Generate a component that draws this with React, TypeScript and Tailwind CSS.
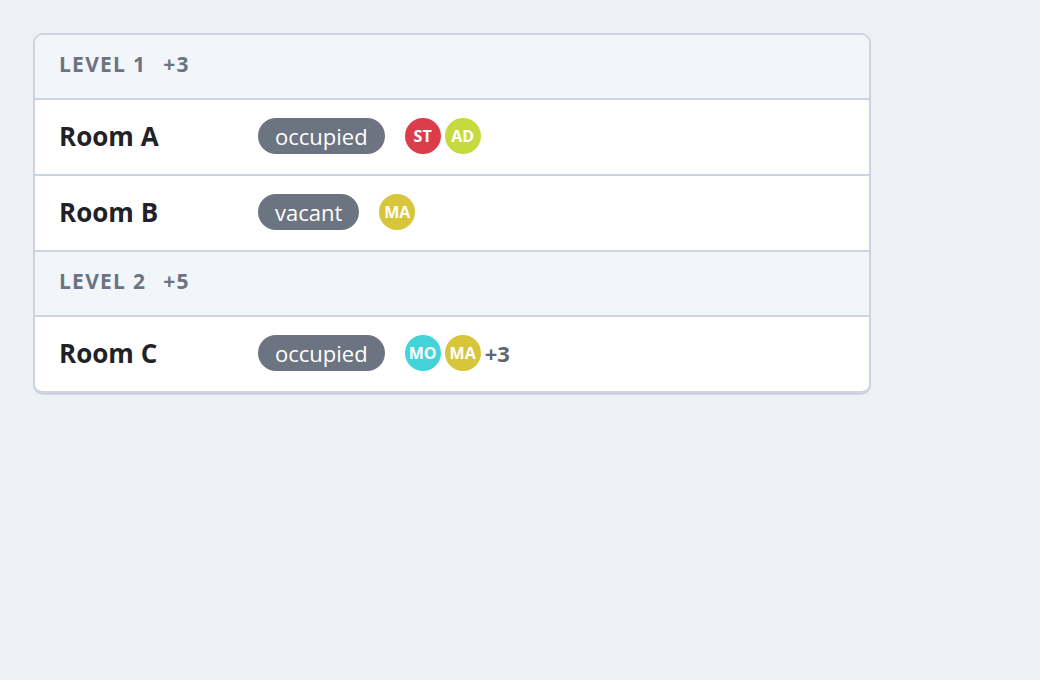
type Person = { initials: string; color: string };

interface Room {
  name: string;
  status: string;
  people: Person[];
  extra?: number;
}

interface Level {
  label: string;
  more: number;
  rooms: Room[];
}

const levels: Level[] = [
  {
    label: "Level 1",
    more: 3,
    rooms: [
      {
        name: "Room A",
        status: "occupied",
        people: [
          { initials: "ST", color: "bg-[#dc3d4d]" },
          { initials: "AD", color: "bg-[#c6d93f]" },
        ],
      },
      {
        name: "Room B",
        status: "vacant",
        people: [{ initials: "MA", color: "bg-[#d7c53b]" }],
      },
    ],
  },
  {
    label: "Level 2",
    more: 5,
    rooms: [
      {
        name: "Room C",
        status: "occupied",
        people: [
          { initials: "MO", color: "bg-[#45d3da]" },
          { initials: "MA", color: "bg-[#d7c53b]" },
        ],
        extra: 3,
      },
    ],
  },
];

export default function App() {
  return (
    <div className="min-h-[680px] bg-[#edf1f6] p-[33px] font-['Open_Sans',sans-serif]">
      <div className="w-[838px] overflow-hidden rounded-[10px] border-2 border-b-4 border-[#cdd4df] bg-white">
        {levels.map((level, li) => (
          <div key={level.label} className={li > 0 ? "border-t-2 border-[#cdd4df]" : ""}>
            {/* Level header */}
            <div className="flex h-[63px] items-center gap-[17px] bg-[#f2f5fa] px-6 pb-[3px] text-[21px] font-bold uppercase tracking-[0.06em] text-[#6b7480]">
              <span>{level.label}</span>
              <span>+{level.more}</span>
            </div>

            {level.rooms.map((room) => (
              <div
                key={room.name}
                className="flex h-[76px] items-center border-t-2 border-[#cdd4df] px-6 pb-[2px]"
              >
                <div className="w-[199px] text-[26px] font-bold text-[#1f2329]">{room.name}</div>
                <span className="flex h-9 items-center rounded-full bg-[#6b7480] px-[17px] text-[22px] text-white">
                  {room.status}
                </span>
                <div className="ml-5 flex items-center gap-1">
                  {room.people.map((p, i) => (
                    <span
                      key={i}
                      className={`flex h-9 w-9 items-center justify-center rounded-full text-[16px] font-bold text-white ${p.color}`}
                    >
                      {p.initials}
                    </span>
                  ))}
                  {room.extra && (
                    <span className="text-[22px] font-bold text-[#5f6771]">+{room.extra}</span>
                  )}
                </div>
              </div>
            ))}
          </div>
        ))}
      </div>
    </div>
  );
}
